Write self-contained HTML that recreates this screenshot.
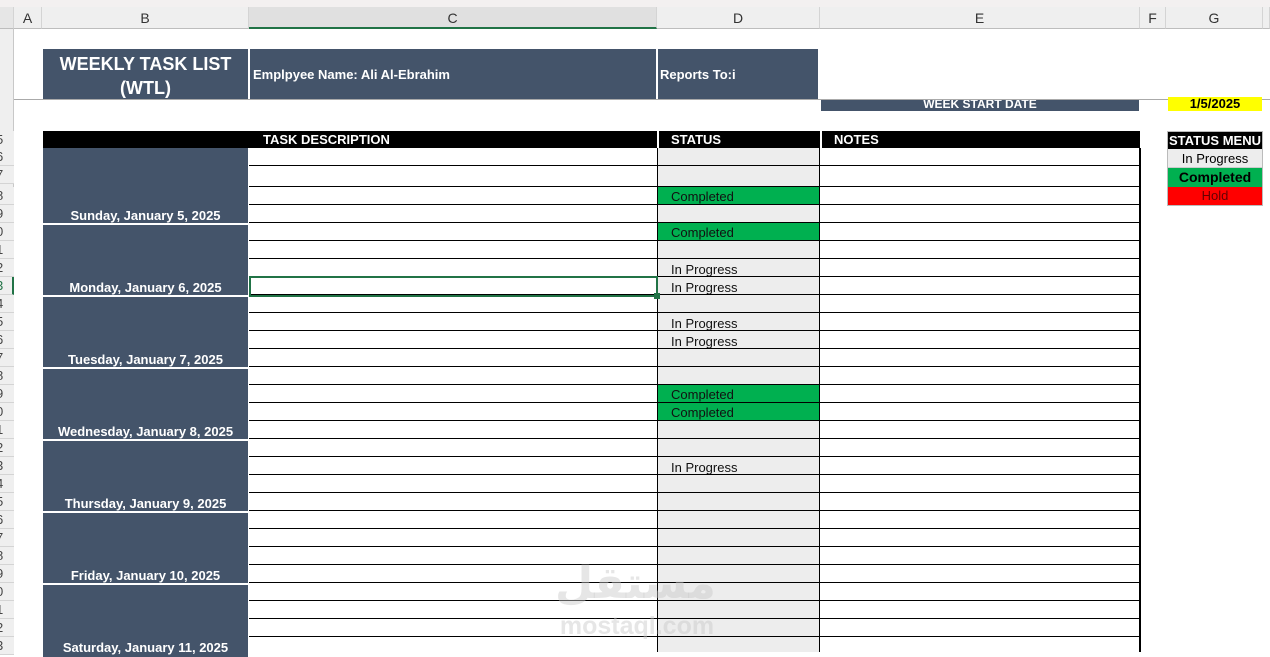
<!DOCTYPE html>
<html><head><meta charset="utf-8"><style>
*{margin:0;padding:0;box-sizing:border-box}
body{width:1270px;height:652px;overflow:hidden;background:#fff;position:relative;font-family:"Liberation Sans",sans-serif}
.a{position:absolute}
.ch{position:absolute;top:7px;height:22px;background:#efefef;border-right:1px solid #d4d4d4;border-bottom:1px solid #bdbdbd;font-size:14px;color:#333;text-align:center;line-height:22px}
.rn{position:absolute;left:0;width:14px;height:18px;background:#efefef;border-bottom:1px solid #d4d4d4;font-size:13px;color:#444;line-height:18px;overflow:hidden;text-indent:-4px}
.nav{background:#44546a;color:#fff;font-weight:bold}
.day{position:absolute;left:43px;width:205px;background:#44546a;color:#fff;font-weight:bold;font-size:13px;text-align:center;border-bottom:2px solid #fff}
.day span{position:absolute;left:0;right:0;bottom:0px}
.row{position:absolute;left:249px;width:892px;height:18px;border-bottom:1.5px solid #000}
.st{position:absolute;left:657px;width:163px;background:#ededed;border-left:1.5px solid #000;border-right:1.5px solid #000;font-size:13px;padding-left:13px;line-height:20px;color:#111}
.g{background:#00b050}
</style></head><body>
<div class="a" style="left:0;top:0;width:1270px;height:7px;background:#f3f0f0"></div>
<div class="ch" style="left:0;width:14px;background:#e6e6e6"></div>
<div class="ch" style="left:14px;width:28px">A</div>
<div class="ch" style="left:42px;width:207px">B</div>
<div class="ch" style="left:249px;width:408px;background:#e0e0e0;border-bottom:2px solid #217346">C</div>
<div class="ch" style="left:657px;width:163px">D</div>
<div class="ch" style="left:820px;width:320px">E</div>
<div class="ch" style="left:1140px;width:26px">F</div>
<div class="ch" style="left:1166px;width:97px">G</div>
<div class="ch" style="left:1263px;width:7px"></div>
<div class="a" style="left:0;top:29px;width:14px;height:623px;background:#efefef;border-right:1px solid #c8c8c8"></div>
<div class="rn" style="top:131px">5</div><div class="rn" style="top:148px">6</div><div class="rn" style="top:166px">7</div><div class="rn" style="top:187px">8</div>
<div class="rn" style="top:205px">9</div><div class="rn" style="top:223px">0</div><div class="rn" style="top:241px">1</div><div class="rn" style="top:259px">2</div>
<div class="rn" style="top:277px;color:#217346;border-right:2px solid #217346">3</div><div class="rn" style="top:295px">4</div><div class="rn" style="top:313px">5</div><div class="rn" style="top:331px">6</div>
<div class="rn" style="top:349px">7</div><div class="rn" style="top:367px">8</div><div class="rn" style="top:385px">9</div><div class="rn" style="top:403px">0</div>
<div class="rn" style="top:421px">1</div><div class="rn" style="top:439px">2</div><div class="rn" style="top:457px">3</div><div class="rn" style="top:475px">4</div>
<div class="rn" style="top:493px">5</div><div class="rn" style="top:511px">6</div><div class="rn" style="top:529px">7</div><div class="rn" style="top:547px">8</div>
<div class="rn" style="top:565px">9</div><div class="rn" style="top:583px">0</div><div class="rn" style="top:601px">1</div><div class="rn" style="top:619px">2</div><div class="rn" style="top:637px">3</div>

<div class="a nav" style="left:43px;top:49px;width:205px;height:50px;text-align:center;font-size:18px;line-height:24px;padding-top:3px">WEEKLY TASK LIST<br>(WTL)</div>
<div class="a nav" style="left:250px;top:49px;width:406px;height:50px;font-size:13px;line-height:52px;padding-left:3px">Emplpyee Name: Ali Al-Ebrahim</div>
<div class="a nav" style="left:658px;top:49px;width:160px;height:50px;font-size:13px;line-height:52px;padding-left:2px">Reports To:i</div>
<div class="a" style="left:14px;top:99px;width:1256px;height:1px;background:#aaa"></div>
<div class="a nav" style="left:821px;top:100px;width:318px;height:11px;font-size:12px;line-height:9px;text-align:center;overflow:hidden">WEEK START DATE</div>
<div class="a" style="left:1168px;top:97px;width:94px;height:14px;background:#ff0;font-weight:bold;font-size:13px;text-align:center;line-height:14px">1/5/2025</div>

<div class="a" style="left:43px;top:131px;width:1097px;height:17px;background:#000;color:#fff;font-weight:bold;font-size:13px;line-height:18px">
<span class="a" style="left:220px">TASK DESCRIPTION</span><span class="a" style="left:628px">STATUS</span><span class="a" style="left:791px">NOTES</span>
<span class="a" style="left:614px;top:0;width:1.5px;height:17px;background:#fff"></span><span class="a" style="left:777px;top:0;width:1.5px;height:17px;background:#fff"></span></div>

<div class="day" style="top:148px;height:77px"><span>Sunday, January 5, 2025</span></div>
<div class="day" style="top:225px;height:72px"><span>Monday, January 6, 2025</span></div>
<div class="day" style="top:297px;height:72px"><span>Tuesday, January 7, 2025</span></div>
<div class="day" style="top:369px;height:72px"><span>Wednesday, January 8, 2025</span></div>
<div class="day" style="top:441px;height:72px"><span>Thursday, January 9, 2025</span></div>
<div class="day" style="top:513px;height:72px"><span>Friday, January 10, 2025</span></div>
<div class="day" style="top:585px;height:72px;border-bottom:0"><span style="bottom:2px">Saturday, January 11, 2025</span></div>

<div class="st" style="top:148px;height:504px"></div>
<div class="st g" style="top:187px;height:18px">Completed</div>
<div class="st g" style="top:223px;height:18px">Completed</div>
<div class="st" style="top:260px;height:18px">In Progress</div>
<div class="st" style="top:278px;height:18px">In Progress</div>
<div class="st" style="top:314px;height:18px">In Progress</div>
<div class="st" style="top:332px;height:18px">In Progress</div>
<div class="st g" style="top:385px;height:18px">Completed</div>
<div class="st g" style="top:403px;height:18px">Completed</div>
<div class="st" style="top:458px;height:18px">In Progress</div>
<div class="a" style="left:1139px;top:148px;width:1.5px;height:504px;background:#000"></div>

<div class="row" style="top:148px"></div><div class="row" style="top:166px;height:21px"></div><div class="row" style="top:187px"></div><div class="row" style="top:205px"></div>
<div class="row" style="top:223px"></div><div class="row" style="top:241px"></div><div class="row" style="top:259px"></div><div class="row" style="top:277px"></div>
<div class="row" style="top:295px"></div><div class="row" style="top:313px"></div><div class="row" style="top:331px"></div><div class="row" style="top:349px"></div>
<div class="row" style="top:367px"></div><div class="row" style="top:385px"></div><div class="row" style="top:403px"></div><div class="row" style="top:421px"></div>
<div class="row" style="top:439px"></div><div class="row" style="top:457px"></div><div class="row" style="top:475px"></div><div class="row" style="top:493px"></div>
<div class="row" style="top:511px"></div><div class="row" style="top:529px"></div><div class="row" style="top:547px"></div><div class="row" style="top:565px"></div>
<div class="row" style="top:583px"></div><div class="row" style="top:601px"></div><div class="row" style="top:619px"></div>

<div class="a" style="left:249px;top:276px;width:409px;height:21px;border:2px solid #217346"></div>
<div class="a" style="left:654px;top:293px;width:6px;height:6px;background:#217346"></div>

<div class="a" style="left:1167px;top:131px;width:96px;height:75px;border:1px solid #bbb;font-size:13px;text-align:center">
<div style="background:#000;color:#fff;font-weight:bold;height:17px;line-height:17px">STATUS MENU</div>
<div style="background:#ededed;height:19px;line-height:19px;border-bottom:1px solid #ccc">In Progress</div>
<div style="background:#00b050;font-weight:bold;height:19px;line-height:19px;font-size:14px">Completed</div>
<div style="background:#f00;height:18px;line-height:18px;color:#600">Hold</div></div>

<div class="a" style="left:555px;top:560px;width:160px;text-align:center;font-size:44px;font-weight:bold;color:rgba(200,200,200,0.45);font-family:'DejaVu Sans',sans-serif;line-height:48px">مستقل</div>
<div class="a" style="left:557px;top:613px;width:160px;text-align:center;font-size:25px;font-weight:bold;color:rgba(200,200,200,0.45);line-height:26px">mostaql.com</div>
</body></html>
